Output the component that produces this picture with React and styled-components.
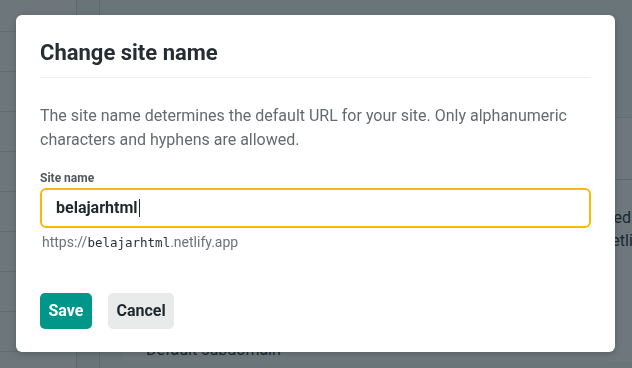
import React from "react";
import styled, { createGlobalStyle } from "styled-components";

const Global = createGlobalStyle`
  html, body { margin: 0; padding: 0; }
  body {
    width: 632px;
    height: 368px;
    overflow: hidden;
    font-family: Roboto, "Liberation Sans", Arial, sans-serif;
    background: #ffffff;
    color: #0e1e25;
  }
  * { box-sizing: border-box; }
`;

/* ---------- background page (behind the overlay) ---------- */
const Page = styled.div`
  display: grid;
  grid-template-columns: 76px 24px 1fr;
  height: 368px;
  overflow: hidden;
  background: #ffffff;
`;

const Sidebar = styled.nav`
  display: flex;
  flex-direction: column;
  padding-top: 31px;
  background: #fbfbfc;
`;

const SideRow = styled.div`
  height: 40px;
  flex: none;
  border-top: 1px solid #dadee0;
`;

const Rail = styled.div`
  border-left: 1px solid #d5dadc;
  border-right: 1px solid #d5dadc;
  background: #f1f4f6;
`;

const Main = styled.main`
  display: flex;
  flex-direction: column;
  padding: 0 0 0 22px;
  background: #f5f7f8;
  overflow: hidden;
`;

const Card = styled.section`
  margin-top: 117px;
  border-top: 1px solid #e0e4e6;
  background: #ffffff;
  display: flex;
  flex-direction: column;
`;

const CardHead = styled.div`
  height: 62px;
  border-bottom: 1px solid #d4d9dc;
`;

const CardRow = styled.div`
  display: flex;
  flex-direction: column;
  align-items: flex-end;
  padding: 26px 1px 0 0;
  height: 159px;
`;

const RowLine = styled.span`
  display: block;
  font-size: 16px;
  line-height: 23px;
  color: #2e3a40;
  white-space: nowrap;
  margin-right: ${(p) => p.$shift || 0}px;
`;

const SubHead = styled.h3`
  margin: 0;
  padding-left: 24px;
  font-size: 16px;
  line-height: 22px;
  font-weight: 400;
  color: #2e3a40;
`;

/* ---------- overlay + dialog ---------- */
const Overlay = styled.div`
  position: fixed;
  inset: 0;
  background: rgba(14, 30, 37, 0.6);
  display: flex;
  justify-content: flex-start;
  align-items: flex-start;
  padding: 15px 0 0 16px;
`;

const Dialog = styled.div`
  width: 599px;
  background: #ffffff;
  border-radius: 6px;
  box-shadow: 0 2px 6px rgba(14, 30, 37, 0.25);
  padding: 23px 24px 23px;
  display: flex;
  flex-direction: column;
  & > * { flex: none; }
`;

const Title = styled.h2`
  margin: 0;
  font-size: 22px;
  line-height: 30px;
  font-weight: 700;
  color: #262e32;
`;

const Divider = styled.hr`
  margin: 9px 0 0;
  border: 0;
  border-top: 1px solid #eef0f1;
`;

const Description = styled.p`
  margin: 26px 0 0;
  font-size: 16px;
  line-height: 24px;
  color: #636b6f;
`;

const Label = styled.label`
  display: block;
  margin-top: 18px;
  font-size: 12px;
  line-height: 16px;
  font-weight: 700;
  color: #50585c;
`;

const Field = styled.div`
  margin-top: 2px;
  height: 40px;
  border: 2px solid #f6b80b;
  border-radius: 6px;
  padding: 0 14px;
  display: flex;
  align-items: center;
  font-size: 16px;
  line-height: 24px;
  font-weight: 700;
  color: #1f292e;
`;

const Caret = styled.span`
  display: inline-block;
  width: 1px;
  height: 18px;
  margin-left: 1px;
  background: #1f292e;
`;

const Helper = styled.div`
  margin-top: 4px;
  padding-left: 2px;
  font-size: 14px;
  line-height: 20px;
  color: #6b7377;
`;

const Mono = styled.code`
  font-family: "DejaVu Sans Mono", "Liberation Mono", monospace;
  font-size: 12.5px;
  color: #283236;
`;

const Actions = styled.div`
  margin-top: 40px;
  display: flex;
  gap: 16px;
`;

const Button = styled.button`
  height: 36px;
  padding: 0 8.5px;
  border: 0;
  border-radius: 5px;
  font-family: inherit;
  font-size: 16px;
  font-weight: 700;
  line-height: 20px;
  cursor: pointer;
  background: ${(p) => (p.$primary ? "#00968a" : "#e9ebeb")};
  color: ${(p) => (p.$primary ? "#ffffff" : "#1d272c")};
`;

export default function App() {
  return (
    <>
      <Global />
      <Page>
        <Sidebar>
          {Array.from({ length: 9 }).map((_, i) => (
            <SideRow key={i} />
          ))}
        </Sidebar>
        <Rail />
        <Main>
          <Card>
            <CardHead />
            <CardRow>
              <RowLine>Your site is deployed</RowLine>
              <RowLine $shift={-45}>at belajarhtml.netlify.app</RowLine>
            </CardRow>
            <SubHead>Default subdomain</SubHead>
          </Card>
        </Main>
      </Page>
      <Overlay>
        <Dialog role="dialog" aria-labelledby="dlg-title">
          <Title id="dlg-title">Change site name</Title>
          <Divider />
          <Description>
            The site name determines the default URL for your site. Only
            alphanumeric characters and hyphens are allowed.
          </Description>
          <Label>Site name</Label>
          <Field>
            belajarhtml
            <Caret />
          </Field>
          <Helper>
            https://<Mono>belajarhtml</Mono>.netlify.app
          </Helper>
          <Actions>
            <Button $primary>Save</Button>
            <Button>Cancel</Button>
          </Actions>
        </Dialog>
      </Overlay>
    </>
  );
}
